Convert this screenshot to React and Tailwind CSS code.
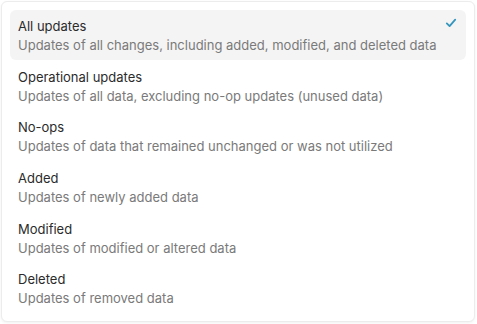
import React from 'react';

const options = [
    { title: 'All updates', desc: 'Updates of all changes, including added, modified, and deleted data', selected: true },
    { title: 'Operational updates', desc: 'Updates of all data, excluding no-op updates (unused data)' },
    { title: 'No-ops', desc: 'Updates of data that remained unchanged or was not utilized' },
    { title: 'Added', desc: 'Updates of newly added data' },
    { title: 'Modified', desc: 'Updates of modified or altered data' },
    { title: 'Deleted', desc: 'Updates of removed data' },
];

const App = () => {
    return (
        <div className="w-[477px] h-[324px] bg-white p-px" style={{ fontFamily: 'Inter, "Noto Sans", sans-serif' }}>
            <div className="w-[474px] h-[321px] rounded-md border border-[#ececec] bg-white shadow-[0_1px_3px_rgba(0,0,0,0.06)] p-2 flex flex-col gap-px">
                {options.map((opt) => (
                    <div
                        key={opt.title}
                        className={`relative h-[50px] rounded-md px-2 pt-[7px] ${opt.selected ? 'bg-[#f4f4f4]' : ''}`}
                    >
                        <div className="text-[13px] leading-[19px] text-[#2b2b2b]">{opt.title}</div>
                        <div className="text-[13px] leading-[19px] text-[#7a7a7a]">{opt.desc}</div>
                        {opt.selected && (
                            <svg className="absolute right-[9px] top-[7px]" width="12" height="12" viewBox="0 0 12 12" fill="none">
                                <path d="M1.8 6.4 L4.6 9.1 L10.2 2.6" stroke="#3596bd" strokeWidth="1.8" strokeLinecap="round" strokeLinejoin="round" />
                            </svg>
                        )}
                    </div>
                ))}
            </div>
        </div>
    );
};

export default App;
